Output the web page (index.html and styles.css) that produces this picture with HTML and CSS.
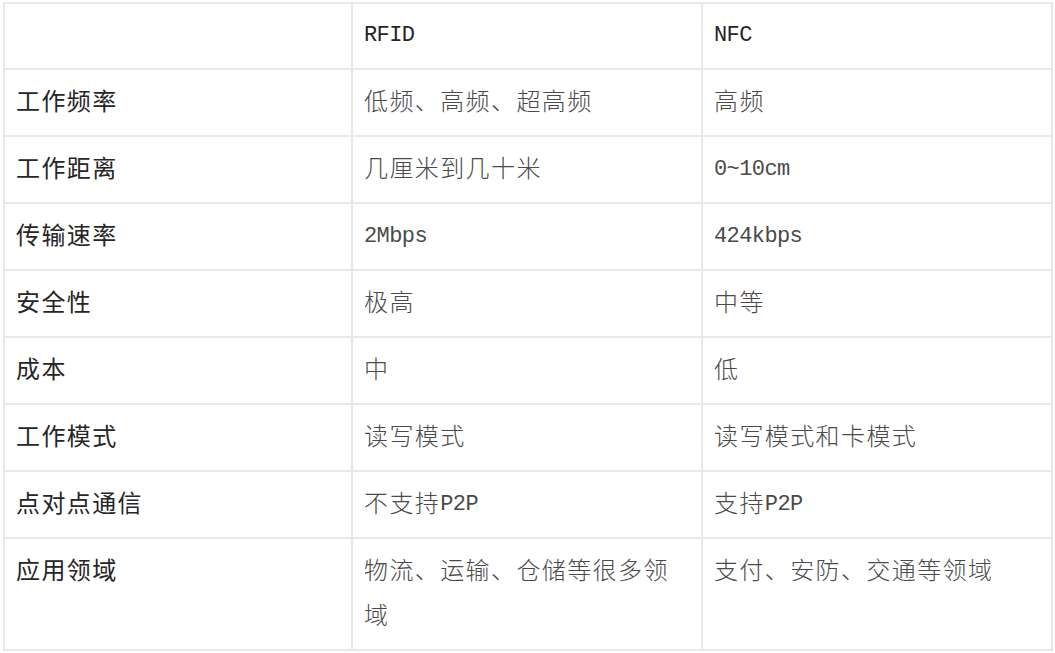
FILE: index.html
```html
<!DOCTYPE html>
<html lang="zh-CN">
<head>
<meta charset="utf-8">
<title>RFID vs NFC</title>
<link rel="stylesheet" href="styles.css">
</head>
<body>
<table class="cmp">
  <colgroup><col class="c1"><col class="c2"><col class="c3"></colgroup>
  <tr><td class="key"></td><td class="head"><span class="en">RFID</span></td><td class="head"><span class="en">NFC</span></td></tr>
  <tr><td class="key">工作频率</td><td>低频、高频、超高频</td><td>高频</td></tr>
  <tr><td class="key">工作距离</td><td>几厘米到几十米</td><td><span class="en">0~10cm</span></td></tr>
  <tr><td class="key">传输速率</td><td><span class="en">2Mbps</span></td><td><span class="en">424kbps</span></td></tr>
  <tr><td class="key">安全性</td><td>极高</td><td>中等</td></tr>
  <tr><td class="key">成本</td><td>中</td><td>低</td></tr>
  <tr><td class="key">工作模式</td><td>读写模式</td><td>读写模式和卡模式</td></tr>
  <tr><td class="key">点对点通信</td><td>不支持<span class="en">P2P</span></td><td>支持<span class="en">P2P</span></td></tr>
  <tr><td class="key">应用领域</td><td>物流、运输、仓储等很多领域</td><td>支付、安防、交通等领域</td></tr>
</table>
</body>
</html>
```
FILE: styles.css
```css
html, body {
  margin: 0;
  padding: 0;
  background: #ffffff;
}
body {
  font-family: "Noto Sans CJK SC", "Noto Sans", sans-serif;
}
.cmp {
  margin: 2px 0 0 3px;
  width: 1050px;
  table-layout: fixed;
  border-collapse: separate;
  border-spacing: 0;
  border-top: 2px solid #e8e8e8;
  border-left: 2px solid #e8e8e8;
}
.c1 { width: 348px; }
.c2 { width: 350px; }
.c3 { width: 350px; }
.cmp td {
  border-right: 2px solid #e8e8e8;
  border-bottom: 2px solid #e8e8e8;
  padding: 7px 12px 13px 11px;
  vertical-align: top;
  font-size: 24px;
  line-height: 45px;
  height: 45px;
  letter-spacing: 1.4px;
  color: #4a4a4a;
  font-weight: 300;
  word-break: break-all;
}
.cmp tr:first-child td {
  padding-top: 6px;
}
.cmp td.key {
  color: #262626;
  font-weight: 400;
}
.cmp td.head {
  color: #262626;
}
.en {
  font-family: "Liberation Mono", monospace;
  font-size: 22px;
  line-height: 1;
  letter-spacing: -0.6px;
  vertical-align: 2px;
}
```
